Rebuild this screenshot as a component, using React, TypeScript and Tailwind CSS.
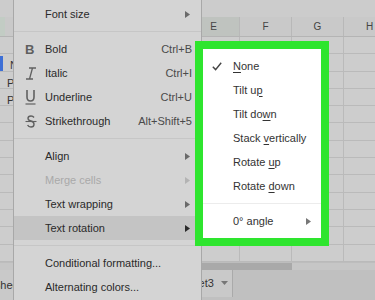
import React from "react";

const cols = ["E", "F", "G", "H"];

function Arrow({ className = "" }: { className?: string }) {
  return (
    <svg width="5" height="7" viewBox="0 0 5 7" className={className}>
      <path d="M0 0 L5 3.5 L0 7 Z" fill="currentColor" />
    </svg>
  );
}

function BoldIcon() {
  return (
    <span className="w-[10px] text-[13px] font-bold leading-none text-[#5f5f5f]">B</span>
  );
}
function ItalicIcon() {
  return (
    <svg width="12" height="13" viewBox="0 0 12 13" className="text-[#606060]">
      <path d="M4 1 H11 M1 12 H8 M7.5 1 L4.5 12" stroke="currentColor" strokeWidth="1.3" fill="none" />
    </svg>
  );
}
function UnderlineIcon() {
  return (
    <svg width="11" height="16" viewBox="0 0 11 16" className="text-[#606060]">
      <path d="M2 1 V8 Q2 12 5.5 12 Q9 12 9 8 V1" stroke="currentColor" strokeWidth="1.6" fill="none" />
      <path d="M0.5 15 H10.5" stroke="currentColor" strokeWidth="1.2" />
    </svg>
  );
}
function StrikeIcon() {
  return (
    <svg width="12" height="13" viewBox="0 0 12 13" className="text-[#606060]">
      <path d="M9 2.5 Q8 1 6 1 Q3 1 3 3.3 Q3 5.4 6 6 Q9 6.7 9 9.2 Q9 12 6 12 Q3.5 12 2.6 10" stroke="currentColor" strokeWidth="1.4" fill="none" />
      <path d="M0.5 6.5 H11.5" stroke="currentColor" strokeWidth="1.1" />
    </svg>
  );
}

type Item = {
  label: string;
  icon?: React.ReactNode;
  shortcut?: string;
  arrow?: boolean;
  disabled?: boolean;
  active?: boolean;
};

const groups: Item[][] = [
  [{ label: "Font size", arrow: true }],
  [
    { label: "Bold", icon: <BoldIcon />, shortcut: "Ctrl+B" },
    { label: "Italic", icon: <ItalicIcon />, shortcut: "Ctrl+I" },
    { label: "Underline", icon: <UnderlineIcon />, shortcut: "Ctrl+U" },
    { label: "Strikethrough", icon: <StrikeIcon />, shortcut: "Alt+Shift+5" },
  ],
  [
    { label: "Align", arrow: true },
    { label: "Merge cells", arrow: true, disabled: true },
    { label: "Text wrapping", arrow: true },
    { label: "Text rotation", arrow: true, active: true },
  ],
  [{ label: "Conditional formatting..." }, { label: "Alternating colors..." }],
];

function MainMenu() {
  return (
    <div className="absolute left-[13px] top-0 w-[189px] h-[310px] bg-[#d4d4d4] border-x border-[#a8a8a8] pt-[2px] text-[11px] text-[#2a2a2a]">
      {groups.map((g, gi) => (
        <div key={gi}>
          {gi > 0 && (
            <div className="h-[11px] flex items-center">
              <div className="h-px w-full bg-[#c6c6c6]" />
            </div>
          )}
          {g.map((it) => (
            <div
              key={it.label}
              className={`relative h-[24px] flex items-center pl-[31px] pr-[9px] ${it.active ? "bg-[#c4c4c4]" : ""}`}
            >
              {it.icon && (
                <span className="absolute left-[11px] top-0 h-full flex items-center">{it.icon}</span>
              )}
              <span className={`flex-1 ${it.disabled ? "text-[#a9a9a9]" : ""}`}>{it.label}</span>
              {it.shortcut && <span className="text-[#4a4a4a]">{it.shortcut}</span>}
              {it.arrow && (
                <Arrow
                  className={`mr-[2px] ${it.disabled ? "text-[#b3b3b3]" : it.active ? "text-[#2a2a2a]" : "text-[#6a6a6a]"}`}
                />
              )}
            </div>
          ))}
        </div>
      ))}
    </div>
  );
}

const subItems: { pre: string; u: string; post: string; check?: boolean }[] = [
  { pre: "", u: "N", post: "one", check: true },
  { pre: "Tilt u", u: "p", post: "" },
  { pre: "Tilt do", u: "w", post: "n" },
  { pre: "Stack ", u: "v", post: "ertically" },
  { pre: "Rotate ", u: "u", post: "p" },
  { pre: "Rotate ", u: "d", post: "own" },
];

function SubMenu() {
  return (
    <div className="absolute left-[195px] top-[41px] w-[134px] h-[205px] border-[8px] border-[#2ee52e] bg-white pt-[5px] text-[11px] text-[#333]">
      {subItems.map((s, i) => (
        <div key={i} className="relative h-[24px] flex items-center pl-[30px]">
          {s.check && (
            <svg width="10" height="9" viewBox="0 0 10 9" className="absolute left-[9px] top-[8px] text-[#444]">
              <path d="M0.8 4.8 L3.6 7.6 L9.2 0.8" stroke="currentColor" strokeWidth="1.4" fill="none" />
            </svg>
          )}
          <span>
            {s.pre}
            <u className="underline-offset-2">{s.u}</u>
            {s.post}
          </span>
        </div>
      ))}
      <div className="h-[11px] flex items-center">
        <div className="h-px w-full bg-[#ececec]" />
      </div>
      <div className="h-[24px] flex items-center pl-[30px] pr-[10px]">
        <span className="flex-1">0° angle</span>
        <Arrow className="text-[#777]" />
      </div>
    </div>
  );
}

function Row({ first }: { first?: React.ReactNode }) {
  return (
    <div className="flex h-[17.3px] border-b border-[#bababa]">
      <div className="relative w-[187px] shrink-0">{first}</div>
      {cols.map((c) => (
        <div key={c} className="w-[52px] shrink-0 border-l border-[#bababa]" />
      ))}
    </div>
  );
}

export default function App() {
  const rows = Array.from({ length: 13 });
  return (
    <div className="relative w-[375px] h-[300px] overflow-hidden bg-[#cdcdcd] font-['Liberation_Sans',Arial,sans-serif]">
      <div className="flex flex-col h-full">
        <div className="h-[17px] bg-[#cccccc]" />
        <div className="flex h-[20px] border-b border-[#b4b4b4] bg-[#c9c9c9] text-[10px] text-[#444]">
          <div className="w-[187px] shrink-0 flex">
            <div className="w-[5px] bg-[#c2ccc4]" />
          </div>
          {cols.map((c, i) => (
            <div
              key={c}
              className={`w-[52px] shrink-0 flex items-center justify-center border-l border-[#b8b8b8] ${i === 0 ? "bg-[#bfc3bf]" : ""}`}
            >
              {c}
            </div>
          ))}
        </div>
        {rows.map((_, i) => (
          <Row
            key={i}
            first={
              i === 1 ? (
                <>
                  <div className="absolute left-0 top-[2px] w-[3px] h-[15px] bg-[#3d6fd6]" />
                  <span className="absolute left-[10px] top-[3px] text-[11px] text-[#333]">Name</span>
                </>
              ) : i === 2 ? (
                <span className="absolute left-[7px] top-[3px] text-[11px] text-[#333]">Pa</span>
              ) : i === 3 ? (
                <span className="absolute left-[7px] top-[3px] text-[11px] text-[#333]">Pe</span>
              ) : null
            }
          />
        ))}
        <div className="h-[8px] flex bg-[#c6c6c6] border-t border-[#bdbdbd]">
          <div className="w-[202px]" />
          <div className="w-[90px] bg-[#a9a9a9]" />
        </div>
        <div className="flex-1 flex bg-[#c0c0c0] text-[11px] text-[#333]">
          <div className="w-[13px] overflow-hidden bg-[#c9c9c9] flex items-center">
            <span className="ml-[-7px] whitespace-nowrap">Sheet1</span>
          </div>
          <div className="w-[165px]" />
          <div className="w-[55px] h-[27px] bg-[#c9c9c9] border-r border-[#aaaaaa] flex items-center pl-[1px]">
            <span>Sheet3</span>
            <svg width="7" height="4" viewBox="0 0 7 4" className="ml-[7px] text-[#777]">
              <path d="M0 0 L7 0 L3.5 4 Z" fill="currentColor" />
            </svg>
          </div>
        </div>
      </div>
      <MainMenu />
      <SubMenu />
    </div>
  );
}
